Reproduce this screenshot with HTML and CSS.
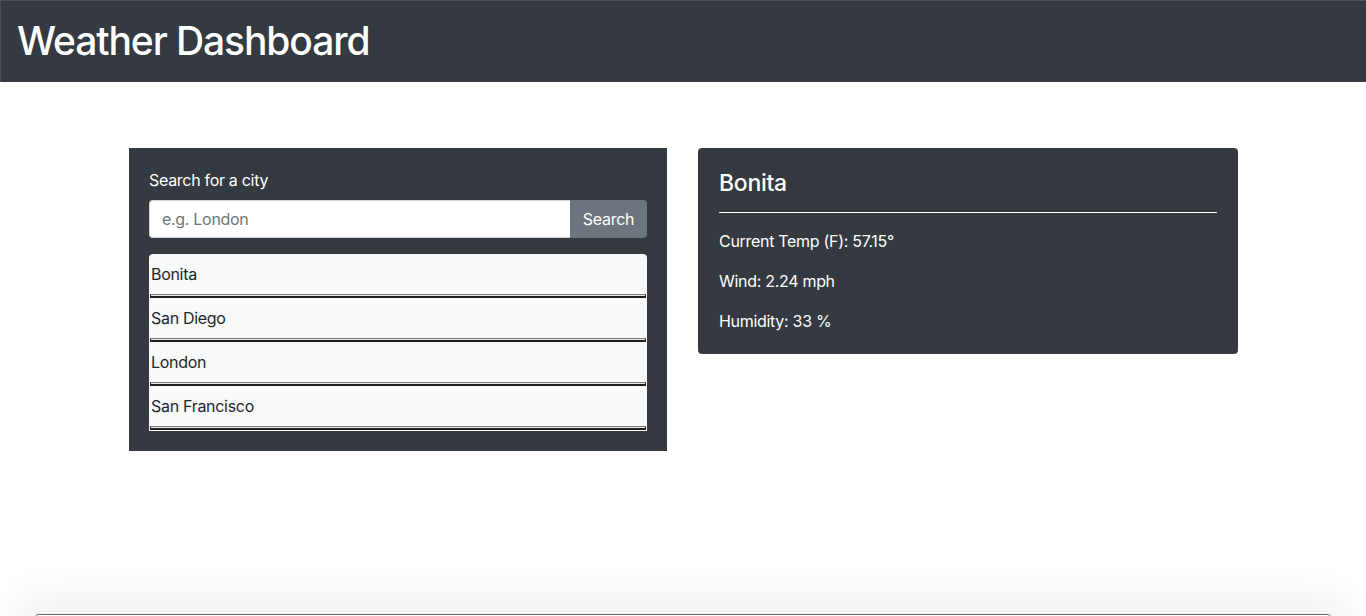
FILE: index.html
```html
<!DOCTYPE html>
<html lang="en">
<head>
<meta charset="utf-8">
<title>Weather Dashboard</title>
<link rel="stylesheet" href="styles.css">
</head>
<body>
<header class="topbar">
  <h1 class="title">Weather Dashboard</h1>
</header>
<main class="container">
  <section class="search-card">
    <label class="search-label" for="city">Search for a city</label>
    <div class="search-group">
      <input id="city" class="search-input" type="text" placeholder="e.g. London">
      <button class="search-btn" type="button">Search</button>
    </div>
    <ul class="history">
      <li class="history-item"><span class="history-name">Bonita</span><hr class="history-rule"></li>
      <li class="history-item"><span class="history-name">San Diego</span><hr class="history-rule"></li>
      <li class="history-item"><span class="history-name">London</span><hr class="history-rule"></li>
      <li class="history-item"><span class="history-name">San Francisco</span><hr class="history-rule"></li>
    </ul>
  </section>
  <section class="weather-card">
    <h2 class="city-name">Bonita</h2>
    <hr class="weather-rule">
    <p class="stat">Current Temp (F): 57.15°</p>
    <p class="stat">Wind: 2.24 mph</p>
    <p class="stat">Humidity: 33 %</p>
  </section>
</main>
<footer class="footer"></footer>
</body>
</html>
```
FILE: styles.css
```css
html, body {
  margin: 0;
  padding: 0;
  background: #ffffff;
  font-family: Inter, "Helvetica Neue", Arial, sans-serif;
  font-size: 16px;
  line-height: 24px;
  letter-spacing: -0.3px;
  overflow: hidden;
}

.topbar {
  background: #343a40;
  border-top: 1px solid #4a5056;
  border-left: 1px solid #4a5056;
  padding: 16px 16px 17px 16px;
  height: 48px;
}

.title {
  margin: 0;
  color: #ffffff;
  font-size: 39px;
  line-height: 48px;
  font-weight: 500;
  letter-spacing: -1.1px;
}

.container {
  display: grid;
  grid-template-columns: 538px 540px;
  column-gap: 31px;
  align-items: start;
  padding: 0 0 0 129px;
  margin-top: 66px;
}

.search-card {
  background: #343a40;
  padding: 20px;
  display: flex;
  flex-direction: column;
}

.search-label {
  color: #ffffff;
  font-size: 16px;
  line-height: 24px;
  margin-bottom: 8px;
}

.search-group {
  display: flex;
  height: 38px;
}

.search-input {
  flex: 1;
  min-width: 0;
  border: 1px solid #ced4da;
  border-right: none;
  border-radius: 4px 0 0 4px;
  padding: 6px 12px;
  font-family: inherit;
  font-size: 16px;
  letter-spacing: -0.3px;
  color: #495057;
  background: #ffffff;
  outline: none;
}

.search-input::placeholder {
  color: #6c757d;
}

.search-btn {
  width: 77px;
  border: none;
  border-radius: 0 4px 4px 0;
  background: #6c757d;
  color: #ffffff;
  font-family: inherit;
  font-size: 16px;
  letter-spacing: -0.3px;
  padding: 6px 12px;
}

.history {
  list-style: none;
  margin: 16px 0 0 0;
  padding: 0 0 1px 0;
  background: #f8f9fa;
  border-radius: 4px 4px 0 0;
}

.history-item {
  padding: 8px 0 0 0;
  color: #212529;
}

.history-name {
  display: block;
  padding-left: 2px;
  line-height: 24px;
}

.history-rule {
  margin: 8px 1px 0 1px;
  height: 1px;
  border-top: 1px solid #7a7a7a;
  border-bottom: 2px solid #1e1e1e;
  border-left: 1px solid #1e1e1e;
  border-right: 1px solid #1e1e1e;
  background: #e8e8e8;
}

.weather-card {
  background: #343a40;
  border-radius: 4px;
  padding: 20px 21px 5px 21px;
  color: #ffffff;
}

.city-name {
  margin: 0;
  font-size: 23px;
  line-height: 30px;
  font-weight: 500;
  letter-spacing: -0.3px;
}

.weather-rule {
  margin: 14px 0 16px 0;
  border: none;
  border-top: 1px solid #ffffff;
  height: 0;
}

.stat {
  margin: 0 0 16px 0;
  font-size: 16px;
  line-height: 24px;
}

.footer {
  margin: 163px 35px 0 35px;
  height: 40px;
  background: #ffffff;
  border-top: 1px solid #666666;
  border-radius: 4px 4px 0 0;
  box-shadow: 0 -4px 36px 14px rgba(0, 0, 0, 0.06);
}
```
